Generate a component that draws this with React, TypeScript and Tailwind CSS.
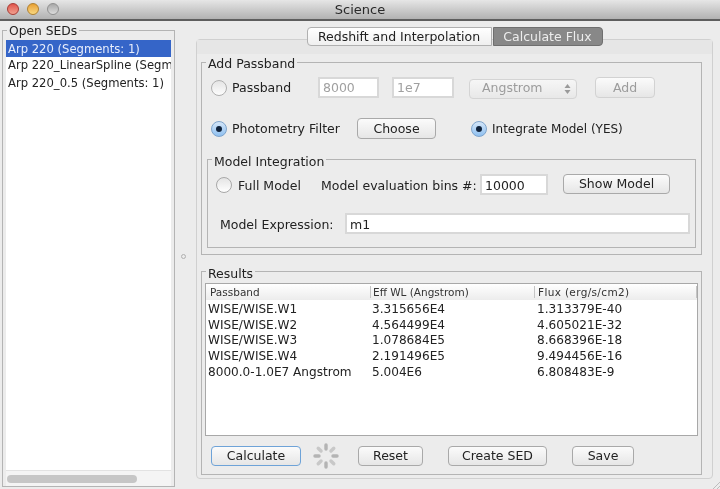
const font = '[font-family:"DejaVu_Sans","Noto_Sans",sans-serif]';

function Radio({ on, disabled }: { on?: boolean; disabled?: boolean }) {
  if (on) {
    return (
      <span className="flex h-[16px] w-[16px] shrink-0 items-center justify-center rounded-full border border-[#7ea4cc] bg-gradient-to-b from-[#d4e6f8] to-[#8fc0f0]">
        <span className="h-[6px] w-[6px] rounded-full bg-[#10223a]" />
      </span>
    );
  }
  return <span className={`h-[16px] w-[16px] shrink-0 rounded-full border border-[#a8a8a8] bg-gradient-to-b from-[#e4e4e4] to-[#ffffff] ${disabled ? "opacity-90" : ""}`} />;
}

function Btn({ w, children, disabled, focus, h = "h-[20px]" }: { w: string; children: string; disabled?: boolean; focus?: boolean; h?: string }) {
  return (
    <button
      className={`flex shrink-0 items-center justify-center rounded-[4px] border bg-gradient-to-b from-[#fbfbfb] to-[#e6e6e6] pt-px text-[12.5px] leading-none ${h} ${w} ${
        disabled ? "border-[#d2d2d2] text-[#9c9c9c]" : focus ? "border-[#6ea3d8] text-[#222]" : "border-[#a9a9a9] text-[#222]"
      }`}
    >
      {children}
    </button>
  );
}

function Field({ w, value, disabled, low }: { w: string; value: string; disabled?: boolean; low?: boolean }) {
  return (
    <div className={`flex h-[21px] shrink-0 items-center border-2 border-[#d8d8d8] bg-white pl-[3px] text-[12.5px] ${low ? "pt-[3px]" : "pt-px"} ${w} ${disabled ? "text-[#a0a0a0]" : "text-[#222]"}`}>
      {value}
    </div>
  );
}

function Spinner() {
  const angles = [0, 45, 90, 135, 180, 225, 270, 315];
  return (
    <svg width="28" height="28" viewBox="-14 -14 28 28" className="shrink-0">
      {angles.map((a, i) => (
        <line key={a} x1="0" y1="-7" x2="0" y2="-11" stroke={i % 2 ? "#c8c8c8" : "#b4b4b4"} strokeWidth="3.4" strokeLinecap="round" transform={`rotate(${a})`} />
      ))}
    </svg>
  );
}

const rows = [
  ["WISE/WISE.W1", "3.315656E4", "1.313379E-40"],
  ["WISE/WISE.W2", "4.564499E4", "4.605021E-32"],
  ["WISE/WISE.W3", "1.078684E5", "8.668396E-18"],
  ["WISE/WISE.W4", "2.191496E5", "9.494456E-16"],
  ["8000.0-1.0E7 Angstrom", "5.004E6", "6.808483E-9"],
];

export default function App() {
  return (
    <div className={`relative flex h-[489px] w-[720px] flex-col overflow-hidden bg-[#ececec] text-[#222] blur-[0.35px] ${font}`}>
      <div className="relative flex h-[21px] shrink-0 items-center justify-center border-b-2 border-[#5e5e5e] bg-gradient-to-b from-[#e6e6e6] to-[#b2b2b2] text-[13px] leading-none text-[#2a2a2a]">
        <div className="absolute left-[7px] top-[3px] flex gap-[8px]">
          <span className="h-[12px] w-[12px] rounded-full border border-[#a83a34] bg-gradient-to-b from-[#e0524a] to-[#f0a090]" />
          <span className="h-[12px] w-[12px] rounded-full border border-[#b08030] bg-gradient-to-b from-[#e8a030] to-[#f8d880]" />
          <span className="h-[12px] w-[12px] rounded-full border border-[#909090] bg-gradient-to-b from-[#a8a8a8] to-[#dcdcdc]" />
        </div>
        <span>Science</span>
      </div>

      <div className="flex min-h-0 flex-1">
        <fieldset className="ml-[2px] mt-px flex h-[465px] w-[173px] min-w-0 shrink-0 flex-col border border-[#b4b4b4]">
          <legend className="ml-[4px] px-[2px] text-[12.3px] leading-[16px]"><span className="inline-block translate-y-px">Open SEDs</span></legend>
          <div className="mx-[3px] mt-[2px] flex min-h-0 flex-1 flex-col overflow-hidden">
            <div className="min-h-0 flex-1 bg-white text-[11.6px] leading-[16px]">
              <div className="h-[17px] whitespace-nowrap bg-[#3565c8] pl-[2px] pt-px text-[#e8eefc]">Arp 220 (Segments: 1)</div>
              <div className="h-[17px] overflow-hidden whitespace-nowrap pl-[2px]">Arp 220_LinearSpline (Segments: 1)</div>
              <div className="h-[17px] whitespace-nowrap pl-[2px] pt-px">Arp 220_0.5 (Segments: 1)</div>
            </div>
            <div className="flex h-[16px] shrink-0 items-center border-t border-[#e2e2e2] bg-[#f4f4f4] pl-px">
              <div className="h-[8px] w-[130px] rounded-full bg-[#c6c6c6]" />
            </div>
          </div>
        </fieldset>

        <div className="flex w-[21px] shrink-0 items-center justify-center pr-[5px] pt-[3px]">
          <span className="h-[5px] w-[5px] rounded-full border border-[#b0b0b0]" />
        </div>

        <div className="mt-[6px] flex w-[517px] shrink-0 flex-col">
          <div className="relative z-10 flex h-[19px] justify-center text-[12.5px] leading-none">
            <div className="flex w-[185px] items-center justify-center rounded-l-[4px] border border-[#b0b0b0] bg-gradient-to-b from-white to-[#efefef] pt-px text-[#222]">Redshift and Interpolation</div>
            <div className="ml-px flex w-[110px] items-center justify-center rounded-r-[4px] border border-[#6f6f6f] bg-[#888888] pt-px text-[#ededed]">Calculate Flux</div>
          </div>

          <div className="-mt-[7px] flex h-[440px] flex-col rounded-[4px] border border-[#d0d0d0]">
            <div className="h-[14px] shrink-0 bg-[#e6e6e6]" />

            <fieldset className="ml-[4px] flex h-[201px] w-[501px] min-w-0 shrink-0 flex-col border border-[#b4b4b4]">
              <legend className="ml-[4px] px-[2px] text-[12.5px] leading-[16px]"><span className="inline-block translate-y-[2px]">Add Passband</span></legend>
              <div className="ml-[9px] mt-[7px] flex h-[21px] items-center text-[12.5px]">
                <Radio disabled />
                <span className="ml-[5px] w-[86px] pt-px">Passband</span>
                <Field w="w-[61px]" value="8000" disabled />
                <div className="w-[13px]" />
                <Field w="w-[62px]" value="1e7" disabled />
                <div className="ml-[15px] flex h-[20px] w-[108px] translate-y-px items-center justify-between rounded-[4px] border border-[#d4d4d4] bg-gradient-to-b from-[#f6f6f6] to-[#e8e8e8] pl-[12px] pr-[5px] text-[12.5px] text-[#9c9c9c]">
                  <span>Angstrom</span>
                  <svg width="7" height="12" viewBox="0 0 7 12"><path d="M3.5 1 L6.5 5 H0.5Z M3.5 11 L6.5 7 H0.5Z" fill="#9a9a9a" /></svg>
                </div>
                <div className="ml-[18px]"><Btn w="w-[60px]" h="h-[21px]" disabled>Add</Btn></div>
              </div>
              <div className="ml-[9px] mt-[20px] flex h-[21px] items-center text-[12.5px]">
                <Radio on />
                <span className="ml-[5px] w-[125px] pt-px">Photometry Filter</span>
                <Btn w="w-[79px]" h="h-[21px]">Choose</Btn>
                <div className="ml-[35px]"><Radio on /></div>
                <span className="ml-[5px] pt-px text-[12px]">Integrate Model (YES)</span>
              </div>
              <fieldset className="ml-[5px] mt-[12px] flex h-[97px] w-[489px] min-w-0 flex-col border border-[#b4b4b4]">
                <legend className="ml-[4px] px-[2px] text-[12.5px] leading-[16px]"><span className="inline-block translate-y-[3px]">Model Integration</span></legend>
                <div className="ml-[8px] mt-[7px] flex h-[21px] items-center text-[12.5px]">
                  <Radio />
                  <span className="ml-[6px] w-[83px] pt-[3px]">Full Model</span>
                  <span className="w-[159px] pt-[3px]">Model evaluation bins #:</span>
                  <Field w="w-[68px]" value="10000" low />
                  <div className="ml-[15px] self-start"><Btn w="w-[107px]">Show Model</Btn></div>
                </div>
                <div className="ml-[12px] mt-[18px] flex h-[21px] items-center text-[12.5px]">
                  <span className="w-[125px] pt-[3px]">Model Expression:</span>
                  <Field w="w-[345px]" value="m1" low />
                </div>
              </fieldset>
            </fieldset>

            <fieldset className="ml-[4px] mt-[8px] flex h-[212px] w-[501px] min-w-0 shrink-0 flex-col border border-[#b4b4b4]">
              <legend className="ml-[4px] px-[2px] text-[12.5px] leading-[16px]"><span className="inline-block translate-y-[3px]">Results</span></legend>
              <div className="ml-[3px] mt-[4px] h-[153px] w-[493px] shrink-0 overflow-hidden border border-[#a8a8a8] bg-white text-[12.1px] leading-[16px]">
                <div className="flex h-[16px] items-center bg-gradient-to-b from-white to-[#ececec] text-[10.5px] leading-none text-[#333]">
                  <span className="w-[164px] pl-[4px]">Passband</span>
                  <span className="h-[12px] w-[164px] border-l border-[#c4c4c4] pl-[2px] leading-[12px]">Eff WL (Angstrom)</span>
                  <span className="h-[12px] flex-1 border-x border-[#c4c4c4] pl-[3px] leading-[12px] tracking-[0.35px]">Flux (erg/s/cm2)</span>
                </div>
                <div className="pt-[1px]">
                  {rows.map((r) => (
                    <div key={r[0]} className="flex h-[15.75px] items-center whitespace-nowrap">
                      <span className="w-[164px] pl-[2px]">{r[0]}</span>
                      <span className="w-[164px] pl-[2px]">{r[1]}</span>
                      <span className="pl-[3px]">{r[2]}</span>
                    </div>
                  ))}
                </div>
              </div>
              <div className="ml-[9px] mt-[10px] flex h-[20px] items-center">
                <Btn w="w-[90px]" focus>Calculate</Btn>
                <div className="ml-[11px]"><Spinner /></div>
                <div className="ml-[18px]"><Btn w="w-[65px]">Reset</Btn></div>
                <div className="ml-[25px]"><Btn w="w-[99px]">Create SED</Btn></div>
                <div className="ml-[25px]"><Btn w="w-[62px]">Save</Btn></div>
              </div>
            </fieldset>
          </div>
        </div>
      </div>

      <svg width="8" height="8" viewBox="0 0 8 8" className="absolute bottom-0 right-0">
        <path d="M1 8 L8 1 M5 8 L8 5" stroke="#bdbdbd" strokeWidth="1" />
      </svg>
    </div>
  );
}
